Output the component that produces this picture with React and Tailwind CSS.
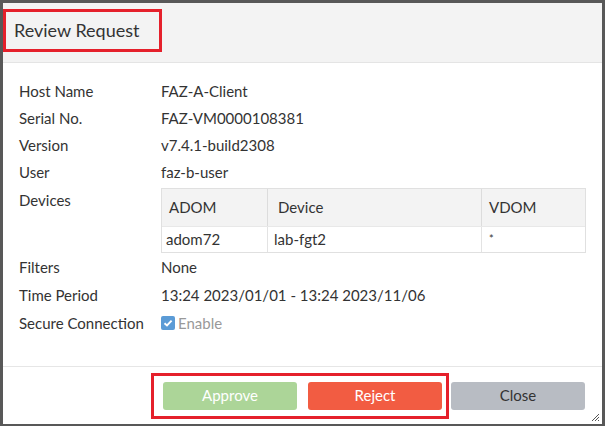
import React from "react";

const rows = [
  ["Host Name", "FAZ-A-Client"],
  ["Serial No.", "FAZ-VM0000108381"],
  ["Version", "v7.4.1-build2308"],
  ["User", "faz-b-user"],
];

function Row({ label, children, tall }) {
  return (
    <div className={tall ? "flex h-[28px] items-center" : "flex h-[27px] items-center"}>
      <div className="w-[142px] shrink-0">{label}</div>
      <div>{children}</div>
    </div>
  );
}

export default function App() {
  return (
    <div
      className="relative flex h-[426px] w-[605px] flex-col border-[3px] border-b-[2px] border-[#585858] bg-white text-[15px] text-[#333]"
      style={{ fontFamily: "Lato, 'Open Sans', sans-serif" }}
    >
      {/* header */}
      <div className="flex h-[60px] shrink-0 items-start border-b border-[#e4e4e4] bg-[#f3f3f3] pt-[6px]">
        <div className="flex h-[43px] w-[159px] items-center border-[3px] border-[#e5202b] pl-[8px] text-[18px] text-[#333]">
          Review Request
        </div>
      </div>

      {/* body */}
      <div className="flex-1 pl-[16px] pt-[15px]">
        {rows.map(([label, value]) => (
          <Row key={label} label={label}>
            {value}
          </Row>
        ))}
        <div className="flex">
          <div className="h-[28px] w-[142px] shrink-0 leading-[28px]">Devices</div>
          <div className="mt-[2px] w-[425px] border border-[#e0e0e0]">
            <div className="grid h-[37px] grid-cols-[105px_214px_1fr] items-center bg-[#f3f3f3]">
              <div className="flex h-full items-center pl-[7px]">ADOM</div>
              <div className="flex h-full items-center border-l border-[#dcdcdc] pl-[10px]">Device</div>
              <div className="flex h-full items-center border-l border-[#dcdcdc] pl-[7px]">VDOM</div>
            </div>
            <div className="grid h-[26px] grid-cols-[105px_214px_1fr] items-center border-t border-[#e8e8e8]">
              <div className="flex h-full items-center pl-[4px]">adom72</div>
              <div className="flex h-full items-center border-l border-[#e3e3e3] pl-[6px]">lab-fgt2</div>
              <div className="flex h-full items-center border-l border-[#e3e3e3] pl-[7px] text-[11px]">*</div>
            </div>
          </div>
        </div>
        <Row label="Filters" tall>None</Row>
        <Row label="Time Period" tall>13:24 2023/01/01 - 13:24 2023/11/06</Row>
        <Row label="Secure Connection" tall>
          <div className="flex items-center">
            <div className="flex h-[14px] w-[14px] items-center justify-center rounded-[2px] bg-[#5b9bd6]">
              <svg width="10" height="10" viewBox="0 0 10 10">
                <path d="M1.5 5.2 L4 7.5 L8.6 2.6" fill="none" stroke="#fff" strokeWidth="1.9" />
              </svg>
            </div>
            <span className="ml-[3px] text-[#999]">Enable</span>
          </div>
        </Row>
      </div>

      {/* footer */}
      <div className="flex h-[58px] shrink-0 items-center justify-end border-t border-[#e6e6e6] pr-[17px]">
        <div className="flex gap-[11px] border-[3px] border-[#e5202b] py-[6px] pl-[9px] pr-[4px]">
          <button className="h-[28px] w-[134px] rounded-[3px] bg-[#acd598] text-[15px] text-white">
            Approve
          </button>
          <button className="h-[28px] w-[134px] rounded-[3px] bg-[#f25c42] text-[15px] text-white">
            Reject
          </button>
        </div>
        <button className="ml-[2px] h-[28px] w-[134px] rounded-[3px] bg-[#b8bcc3] text-[15px] text-[#333]">
          Close
        </button>
      </div>

      {/* resize grip */}
      <svg className="absolute bottom-[2px] right-[2px]" width="9" height="9" viewBox="0 0 9 9">
        <path d="M8 1 L1 8 M8 4 L4 8 M8 7 L7 8" stroke="#555" strokeWidth="1" />
      </svg>
    </div>
  );
}
